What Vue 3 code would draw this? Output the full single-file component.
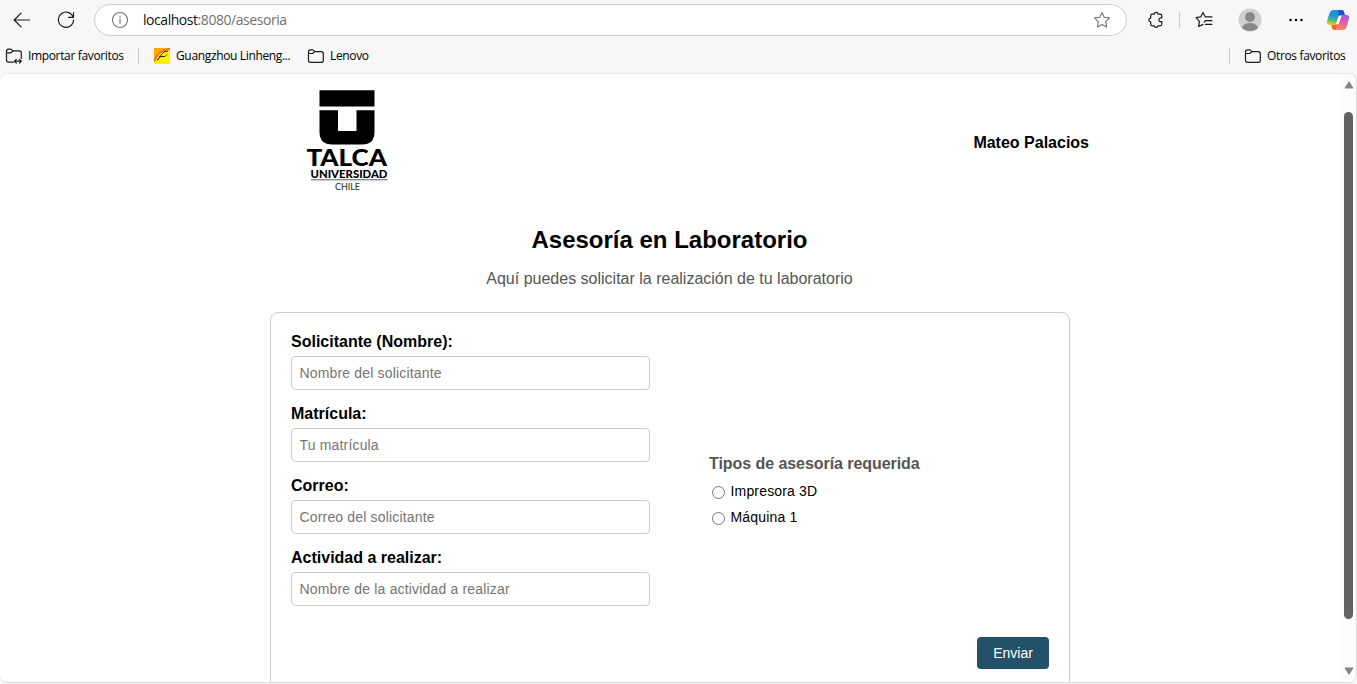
<script setup>
const fields = [
  { id: 'nombre', label: 'Solicitante (Nombre):', hint: 'Nombre del solicitante' },
  { id: 'matricula', label: 'Matrícula:', hint: 'Tu matrícula' },
  { id: 'correo', label: 'Correo:', hint: 'Correo del solicitante' },
  { id: 'actividad', label: 'Actividad a realizar:', hint: 'Nombre de la actividad a realizar' },
]
const types = ['Impresora 3D', 'Máquina 1']
</script>

<template>
  <div class="browser">
    <div class="toolbar">
      <svg class="line back" width="18" height="16" viewBox="0 0 18 16"><path d="M16.5 8H1.5M8 1.2 1.2 8 8 14.8" /></svg>
      <svg class="line reload" width="18" height="18" viewBox="0 0 18 18"><path d="M16.2 6.2A7.6 7.6 0 1 0 16.6 9M16.5 1.5V6.3H11.6" /></svg>
      <div class="address">
        <svg class="line info" width="18" height="18" viewBox="0 0 18 18"><circle cx="9" cy="9" r="7.5" /><path d="M9 8V12.5M9 5.2V6.2" /></svg>
        <span class="url"><b>localhost</b>:8080/asesoria</span>
        <svg class="line star" width="18" height="18" viewBox="0 0 18 18"><path d="M9 1.5 11.2 6.2 16.5 6.9 12.7 10.6 13.6 15.9 9 13.4 4.4 15.9 5.3 10.6 1.5 6.9 6.8 6.2Z" /></svg>
      </div>
      <svg class="line puzzle" width="18" height="18" viewBox="0 0 18 18"><path d="M5.2 3.2H7.4C7.4 .8 11 .8 11 3.2H13.1Q14.8 3.2 14.8 4.9V6.8H13.5C11.4 6.8 11.4 10.6 13.5 10.6H14.8V13Q14.8 14.8 13.1 14.8H11C11 17 7.4 17 7.4 14.8H5.2Q3.7 14.8 3.7 13V10.8C1.2 10.8 1.2 7.1 3.7 7.1V4.8Q3.7 3.2 5.2 3.2Z" /></svg>
      <i class="rule tool-rule"></i>
      <svg class="line collection" width="18" height="18" viewBox="0 0 18 18"><path d="M11 5.9 10.2 5.8 7.9 1.5 5.7 5.9 1.2 6.7 4.4 10.3 3.7 15.5 8 13.4M11 5.9H17M10.4 9.6H17M10.4 13.3H17M10.4 9.6 9.2 11.2" /></svg>
      <svg class="avatar" width="24" height="24" viewBox="0 0 24 24">
        <circle cx="12" cy="12" r="11.5" fill="#d2d0ce" /><circle cx="12" cy="9" r="5" fill="#8a8886" />
        <path d="M4 19.8Q5.5 15 12 15T20 19.8Q16.8 23 12 23T4 19.8Z" fill="#8a8886" />
      </svg>
      <svg class="dots" width="16" height="4" viewBox="0 0 16 4"><circle cx="2.5" cy="2" r="1.2" /><circle cx="8" cy="2" r="1.2" /><circle cx="13.5" cy="2" r="1.2" /></svg>
      <svg class="copilot" width="24" height="22" viewBox="0 0 24 22">
        <defs>
          <linearGradient id="cool" x1=".6" y1="0" x2=".4" y2="1"><stop offset="0" stop-color="#1a8fe6" /><stop offset=".4" stop-color="#1b94d8" /><stop offset=".7" stop-color="#4fb980" /><stop offset="1" stop-color="#e8cd22" /></linearGradient>
          <linearGradient id="warm" x1=".7" y1="0" x2=".4" y2="1"><stop offset="0" stop-color="#a455ee" /><stop offset=".5" stop-color="#ec5c98" /><stop offset="1" stop-color="#ff8b58" /></linearGradient>
        </defs>
        <path d="M7.2 1H15.8Q17.4 1 18 3L18.8 6H15Q13 6 12.4 8L10.4 14.5Q9.9 16 8.2 16H3.5Q.2 16 1 12L3.6 4Q4.7 1 7.2 1Z" fill="url(#cool)" />
        <path d="M12.5 1H15.8Q17.4 1 18 3L18.8 6H15Q13.2 6 12.6 7.2Z" fill="#1c52cc" />
        <path d="M16.8 6H20.5Q24 6 22.9 10L20.5 18Q19.5 21 16.7 21H8.5Q6.6 21 6.1 19L5.4 16H8.4Q10.4 16 11 14L13.2 7.8Q13.8 6 16.8 6Z" fill="url(#warm)" />
        <path d="M5.4 16H8.4Q10.4 16 11 14L11.5 12.6 9.8 21H8.5Q6.6 21 6.1 19Z" fill="#f2683a" />
        <path d="M12.8 7H15.6L12.6 15.3H9.9Z" fill="#f7f7f7" />
      </svg>
    </div>

    <div class="bookmarks">
      <svg class="line folder" width="17" height="17" viewBox="0 0 17 17"><path d="M8.5 14.2H3.7Q1.5 14.2 1.5 12V3.3Q1.5 1.2 3.7 1.2H5.9L8.1 2.9H14.1Q16.3 2.9 16.3 5V10.5M1.7 4.9H5.5L8.1 2.9M9.5 13.2H16.3M11.3 11.4 9.5 13.2 11.3 15M14.5 11.4 16.3 13.2 14.5 15" /></svg>
      <span class="import">Importar favoritos</span>
      <i class="rule fav-rule"></i>
      <svg class="site" width="16" height="16" viewBox="0 0 16 16">
        <path fill="#fff200" d="M0 0H16V16H0Z" /><path d="M0 0H14Q7 2 4 8L1 14H0Z" fill="#ffae00" /><path d="M0 11Q4 2 14 0H16V2Q7 3 4 8L1 13H0Z" fill="#f4702a" />
        <path d="M3 12Q6 11 7 7Q9 3 14 3M5 8.5H11L13 6.5M3 12 5 10.5" fill="none" stroke="#352a12" stroke-width="1" />
      </svg>
      <span class="linheng">Guangzhou Linheng...</span>
      <svg class="line folder lenovo-icon" width="17" height="17" viewBox="0 0 17 17"><path d="M1.5 4Q1.5 1.9 3.6 1.9H5.9L8.1 3.6H14.1Q16.3 3.6 16.3 5.7V12.2Q16.3 14.4 14.1 14.4H3.6Q1.5 14.4 1.5 12.2ZM1.7 5.5H5.5L8.1 3.6" /></svg>
      <span class="lenovo">Lenovo</span>
      <i class="rule end-rule"></i>
      <svg class="line folder other-icon" width="17" height="17" viewBox="0 0 17 17"><path d="M1.5 4Q1.5 1.9 3.6 1.9H5.9L8.1 3.6H14.1Q16.3 3.6 16.3 5.7V12.2Q16.3 14.4 14.1 14.4H3.6Q1.5 14.4 1.5 12.2ZM1.7 5.5H5.5L8.1 3.6" /></svg>
      <span class="others">Otros favoritos</span>
    </div>

    <div class="viewport">
      <main class="page">
        <header class="header">
          <svg class="logo" width="100" height="110" viewBox="0 0 100 110">
            <path d="M19.5 6.3H74.5V22.5H19.5Z" />
            <path d="M19.5 26.3H38V47H56.5V26.3H74.5V48Q74.5 60.5 62 60.5H32.5Q19.5 60.5 19.5 48Z" />
            <text x="6.5" y="81.5" textLength="80.5" lengthAdjust="spacingAndGlyphs" font-size="23" font-weight="900">TALCA</text>
            <text x="10.5" y="93.5" textLength="77" lengthAdjust="spacingAndGlyphs" font-size="11.5" font-weight="900">UNIVERSIDAD</text>
            <path d="M11 95.8H87.5" stroke="#333" stroke-width=".8" />
            <text x="35" y="106" textLength="25" lengthAdjust="spacingAndGlyphs" font-size="10" font-weight="500" fill="#333">CHILE</text>
          </svg>
          <strong>Mateo Palacios</strong>
        </header>
        <h1>Asesoría en Laboratorio</h1>
        <p class="intro">Aquí puedes solicitar la realización de tu laboratorio</p>
        <form class="card" @submit.prevent>
          <div class="columns">
            <div class="fields">
              <div v-for="f in fields" :key="f.id" class="field">
                <label :for="f.id">{{ f.label }}</label>
                <input :id="f.id" type="text" :placeholder="f.hint" />
              </div>
            </div>
            <div class="types">
              <h2>Tipos de asesoría requerida</h2>
              <label v-for="t in types" :key="t" class="option"><input type="radio" name="tipo" :value="t" /><span>{{ t }}</span></label>
            </div>
          </div>
          <div class="actions"><button type="submit">Enviar</button></div>
        </form>
      </main>
      <div class="scrollbar">
        <svg width="10" height="8" viewBox="0 0 10 8"><path d="M5 .8 9 7H1Z" /></svg>
        <div class="thumb"></div>
        <svg class="down" width="10" height="8" viewBox="0 0 10 8"><path d="M1 1H9L5 7.2Z" /></svg>
      </div>
    </div>
  </div>
</template>

<style>
body { margin: 0; overflow: hidden; }
</style>

<style scoped>
* { box-sizing: border-box; }
.browser { width: 1357px; height: 684px; overflow: hidden; background: #f7f7f7; display: flex; flex-direction: column; font-family: "Liberation Sans", Arial, sans-serif; color: #000; }
svg { display: block; flex: none; }
.toolbar { height: 40px; flex: none; display: flex; align-items: center; padding-left: 13px; font-family: "Open Sans", "Noto Sans", sans-serif; }
.line { fill: none; stroke: #1b1b1b; stroke-width: 1.2; stroke-linejoin: round; stroke-linecap: round; }
.reload { margin-left: 26px; }
.address { width: 1033px; height: 32px; flex: none; margin-left: 19px; border: 1px solid #cfcfcf; border-radius: 16px; background: #fff; display: flex; align-items: center; padding: 0 15px 0 16px; }
.line.info, .line.star { stroke: #747474; stroke-width: 1.1; }
.url { margin-left: 14px; flex: 1; font-size: 14px; color: #717171; white-space: nowrap; letter-spacing: -0.45px; line-height: 20px; }
.url b { color: #111; font-weight: 400; }
.puzzle { margin-left: 20px; }
.rule { display: block; width: 1px; height: 16px; background: #c9c9c9; flex: none; }
.tool-rule { margin-left: 14px; }
.collection { margin-left: 15px; }
.avatar { margin-left: 25px; }
.dots { margin-left: 26px; }
.copilot { margin-left: 22px; }
.bookmarks { height: 33px; flex: none; display: flex; align-items: center; padding: 0 11px 1px 5px; font: 12px/18px "Open Sans", "Noto Sans", sans-serif; white-space: nowrap; letter-spacing: -0.35px; }
.bookmarks span { flex: none; }
.import { width: 96px; margin-left: 6px; }
.fav-rule { margin-left: 14px; }
.site { margin-left: 15px; }
.linheng { width: 117px; margin-left: 6px; }
.lenovo-icon { margin-left: 14px; }
.lenovo { margin-left: 6px; }
.end-rule { margin-left: auto; }
.other-icon { margin-left: 14px; }
.others { width: 79px; margin-left: 6px; }
.viewport { height: 610px; flex: none; border: solid #dcdcdc; border-width: 1px 1px 1px 0; border-top-color: #e8e8e8; border-radius: 8px; background: #fff; display: flex; overflow: hidden; }
.page { width: 1340px; height: 608px; overflow: hidden; display: flex; flex-direction: column; align-items: center; flex: none; }
.header { width: 840px; height: 138px; flex: none; display: flex; justify-content: space-between; align-items: center; padding: 0 1px 0 50px; font-size: 16px; }
.logo { font-family: Lato, sans-serif; margin-bottom: 8px; }
h1 { margin: 14px 1px 0 0; font-size: 24px; line-height: 28px; }
.intro { margin: 16px 1px 0 0; font-size: 16px; line-height: 18px; color: #555; }
.card { width: 800px; height: 440px; flex: none; margin: 24px 0 0; border: 1px solid #ccc; border-radius: 8px; padding: 20px; }
.columns { display: grid; grid-template-columns: 359px 340px; column-gap: 59px; align-items: center; }
.fields { display: flex; flex-direction: column; gap: 15px; }
.field { display: flex; flex-direction: column; gap: 5px; }
.field label { font-size: 16px; line-height: 18px; font-weight: 700; }
.field input { width: 359px; height: 34px; margin: 0; border: 1px solid #ccc; border-radius: 4px; padding: 8px 7.5px; font: 14px/16px "Liberation Sans", Arial, sans-serif; letter-spacing: 0.17px; }
.field input::placeholder { color: #757575; }
.types { padding-top: 45px; }
h2 { margin: 0 0 5px; font-size: 16px; line-height: 18px; color: #555; letter-spacing: -0.06px; }
.option { display: flex; align-items: center; height: 26px; font-size: 14px; line-height: 16px; letter-spacing: 0.17px; }
.option input { width: 13px; height: 13px; margin: 3px 5.5px 0 3px; }
.actions { display: flex; justify-content: flex-end; margin-top: 31px; }
button { width: 72px; height: 32px; border: 0; border-radius: 4px; background: #24516a; color: #fff; font: 14px/16px "Liberation Sans", Arial, sans-serif; padding: 0; }
.scrollbar { width: 16px; flex: none; background: #fcfcfc; display: flex; flex-direction: column; align-items: center; padding: 7px 0 7px 1px; }
.scrollbar svg { fill: #858585; stroke: #858585; stroke-width: 1; stroke-linejoin: round; }
.thumb { width: 9px; height: 507px; margin-top: 23px; border-radius: 5px; background: #636363; flex: none; }
.scrollbar .down { margin-top: auto; }
</style>
